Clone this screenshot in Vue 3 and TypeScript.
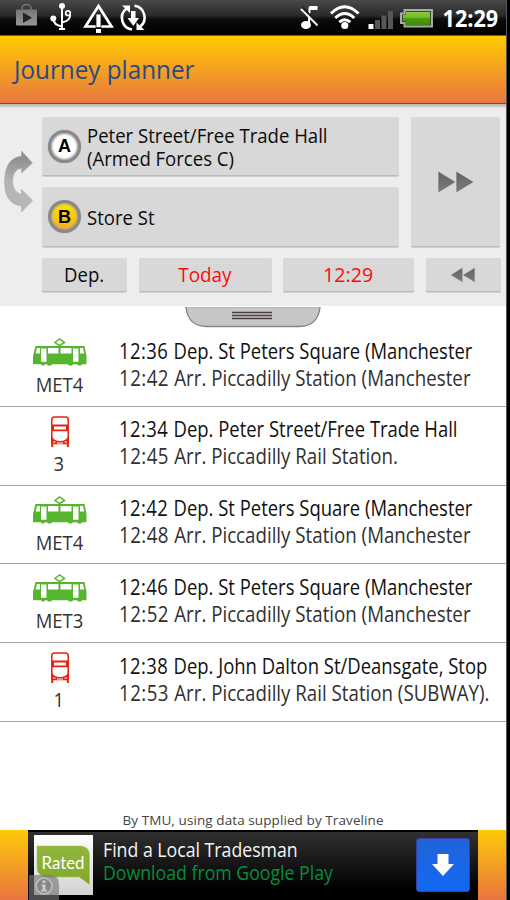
<script setup lang="ts">
interface Leg {
  time: string
  text: string
}

interface Journey {
  kind: 'tram' | 'bus'
  route: string
  legs: Leg[]
}

function journey(kind: Journey['kind'], route: string, depTime: string, from: string, arrTime: string, to: string): Journey {
  return { kind, route, legs: [{ time: depTime, text: `Dep. ${from}` }, { time: arrTime, text: `Arr. ${to}` }] }
}

const journeys: Journey[] = [
  journey('tram', 'MET4', '12:36', 'St Peters Square (Manchester', '12:42', 'Piccadilly Station (Manchester'),
  journey('bus', '3', '12:34', 'Peter Street/Free Trade Hall', '12:45', 'Piccadilly Rail Station.'),
  journey('tram', 'MET4', '12:42', 'St Peters Square (Manchester', '12:48', 'Piccadilly Station (Manchester'),
  journey('tram', 'MET3', '12:46', 'St Peters Square (Manchester', '12:52', 'Piccadilly Station (Manchester'),
  journey('bus', '1', '12:38', 'John Dalton St/Deansgate, Stop', '12:53', 'Piccadilly Rail Station (SUBWAY).'),
]
</script>

<template>
  <div class="device">
    <header class="status">
      <svg class="status-icons" width="507" height="35" viewBox="0 0 507 35">
        <defs>
          <linearGradient id="bag" x1="0" y1="0" x2="0" y2="1"><stop offset="0" stop-color="#777" /><stop offset="1" stop-color="#969696" /></linearGradient>
          <linearGradient id="batt" x1="0" y1="0" x2="0" y2="1"><stop offset="0" stop-color="#8ccb3c" /><stop offset=".45" stop-color="#6fb82a" /><stop offset=".5" stop-color="#4e9c0c" /><stop offset="1" stop-color="#3f8a05" /></linearGradient>
        </defs>
        <path d="M22 9.500V8a4.500 3.500 0 0 1 9 0v1.500" fill="none" stroke="#777" stroke-width="1.500" />
        <rect x="16" y="9.500" width="21" height="16" rx="1" fill="url(#bag)" />
        <path d="M23 12.500v10.500l9-5.300z" fill="#222" />
        <g fill="none" stroke="#fff" stroke-width="2">
          <path d="M62 6v23M53.500 19q0 6 8.500 7.500M62 22.500q9-2 8-8" />
          <circle cx="68" cy="13.200" r="2.300" stroke-width="1.700" />
        </g>
        <circle cx="62" cy="6" r="3" fill="#fff" /><circle cx="53.300" cy="18.500" r="3" fill="#fff" />
        <path d="M59 28h6v2h-6z" fill="#fff" />
        <path d="M98.500 6L85.500 26.500h26z" fill="none" stroke="#fff" stroke-width="2.700" />
        <path d="M96 14h5v13.500h-5z" fill="#fff" stroke="#111" stroke-width=".8" />
        <path d="M96 29h5v4h-5z" fill="#fff" />
        <g fill="none" stroke="#fff" stroke-width="2.600">
          <path d="M126.500 8.500A11.800 11.800 0 0 0 132 29.500M140 26.800A11.800 11.800 0 0 0 134.500 5.800" />
        </g>
        <path d="M122 5.500h8v7.500zM144.500 30h-8v-7.500z" fill="#fff" />
        <path d="M131 11h4.500v7h3.500l-5.700 8-5.800-8h3.500z" fill="#fff" />
        <path d="M309 25V12M309.500 13V8q0-1 1-1h7" fill="none" stroke="#fff" stroke-width="2" />
        <path d="M309 8.500h8.500" stroke="#fff" stroke-width="3" />
        <path d="M302.500 7.500l16 16.500" stroke="#1d1d1d" stroke-width="2" />
        <path d="M301 9l16.500 16.500" stroke="#fff" stroke-width="1.800" />
        <ellipse cx="306" cy="25" rx="5" ry="4" fill="#fff" />
        <g fill="none" stroke="#fff" stroke-width="3">
          <path d="M331 13.500q13.700-13.500 27.500 0M335.300 18q9.500-9 19 0M339.300 22.200q5.500-5 11 0" />
        </g>
        <circle cx="344.800" cy="25.500" r="3.600" fill="#fff" />
        <path d="M368.500 24h5v5h-5z" fill="#fff" />
        <path d="M375 20h5v9h-5zM381.500 15.500h5V29h-5zM388 11h5v18h-5z" fill="#585858" />
        <path d="M404.500 10H432v16.500H404.500V23H401v-9.500h3.500z" fill="#3c4a30" stroke="#a9a9a9" stroke-width="2" />
        <path d="M406 12h24v13h-24v-4h-3v-6h3z" fill="url(#batt)" />
      </svg>
      <span class="clock">12:29</span>
    </header>

    <div class="titlebar"><span class="t title">Journey planner</span></div>

    <section class="form">
      <div class="swap">
        <svg width="30" height="64" viewBox="0 0 30 64">
          <defs><linearGradient id="sw" x1="0" y1="0" x2="0" y2="1"><stop offset="0" stop-color="#858585" /><stop offset=".5" stop-color="#b4b4b4" /><stop offset="1" stop-color="#b8b8b8" /></linearGradient></defs>
          <path d="M17.500 1L28.500 13 17.500 23V18Q8.500 20 8.500 31T17.500 44.500V39.500L28.500 50.500 17.500 62V56Q.5 54 .5 32 .5 8 17.500 6z" fill="url(#sw)" stroke="#aaa" stroke-width=".6" />
        </svg>
      </div>
      <div class="grid">
        <div class="ends">
          <button class="btn place">
            <span class="pin pin-a">A</span>
            <span class="place-text"><span class="t">Peter Street/Free Trade Hall</span><span class="t">(Armed Forces C)</span></span>
          </button>
          <button class="btn place">
            <span class="pin pin-b">B</span>
            <span class="place-text"><span class="t">Store St</span></span>
          </button>
        </div>
        <button class="btn go">
          <svg width="38" height="24" viewBox="0 0 38 24">
            <defs><linearGradient id="ar" x1="0" y1="0" x2="0" y2="1"><stop offset="0" stop-color="#636363" /><stop offset="1" stop-color="#7c7c7c" /></linearGradient></defs>
            <path d="M1 1v22L19 12zM19 1v22L37 12z" fill="url(#ar)" stroke="#e6e6e6" stroke-width=".6" />
          </svg>
        </button>
      </div>
      <div class="times">
        <button class="btn dep"><span class="t">Dep.</span></button>
        <button class="btn day red"><span class="t">Today</span></button>
        <button class="btn hour red"><span class="t">12:29</span></button>
        <button class="btn back">
          <svg width="26" height="16" viewBox="0 0 26 16"><path d="M12.500.8v14.400L.8 8zM24.800.8v14.400L13 8z" fill="url(#ar)" stroke="#bbb" stroke-width=".4" /></svg>
        </button>
      </div>
    </section>

    <div class="handle-row">
      <svg width="136" height="22" viewBox="0 0 136 22">
        <path d="M1 1.500C2 13 9 20.500 22 20.500H114C127 20.500 134 13 135 1.500z" fill="#c6c6c4" />
        <path d="M1 1.500H135" stroke="#b5b5b5" />
        <path d="M1 1C2 13 9 20.500 22 20.500H114C127 20.500 134 13 135 1" fill="none" stroke="#858585" stroke-width="1.400" />
        <path d="M47 6.500h40M47 9.500h40M47 12.500h40" stroke="#4b4145" stroke-width="1.600" />
      </svg>
    </div>

    <ul class="list">
      <li v-for="(j, i) in journeys" :key="i" class="row">
        <div class="mode">
          <svg v-if="j.kind === 'tram'" class="tram" width="54" height="28" viewBox="0 0 54 28">
            <path d="M22 4.500L26.500 1 31.500 4.500 26.500 7.500zM26.500 7.500v3" fill="none" stroke="#55b52f" stroke-width="1.500" />
            <path d="M2.500 8H51.500L53.500 18V26.300H49l-1 1.200h-3L44 26.300H40l-1 1.200H36L35 26.300H19l-1 1.200H15L14 26.300H12l-1 1.200H9L8 26.300H0V18z" fill="#55b52f" />
            <path d="M4 10h3v5.500H2.700zM8 10.500h5.500v13.300H8zM15 10h10.500v5.500H15zM27.500 10H38.500v5.500H27.500zM40 10.500h5.500v13.300H40zM47 10h3l1.200 5.500H47z" fill="#fff" />
          </svg>
          <svg v-else class="bus" width="20" height="31" viewBox="0 0 20 31">
            <path d="M4 1H16Q18 1.200 18.200 3.500V27H1.800V3.500Q2 1.200 4 1z" fill="#fff" stroke="#e3220f" stroke-width="1.500" />
            <path d="M2 8.500H18v2H2zM2 13.500H18v1.800H2zM2 9h2v6H2zM16 9h2v6h-2zM1.200 19.500Q3.500 25 10 25T18.800 19.500V28.300H1.200zM1.200 27h2v4h-2zM16.800 27h2v4h-2z" fill="#e3220f" />
            <path d="M3 26h2.500M14.500 26H17M7 27h6" stroke="#fff" stroke-width="1" />
          </svg>
          <span class="route t">{{ j.route }}</span>
        </div>
        <div class="legs">
          <span v-for="(leg, k) in j.legs" :key="k" class="t leg" :class="{ arr: k === 1 }"><span class="time">{{ `${leg.time} ` }}</span>{{ leg.text }}</span>
        </div>
      </li>
    </ul>

    <p class="credit"><span class="t">By TMU, using data supplied by Traveline</span></p>

    <footer class="adbar">
      <div class="ad">
        <svg class="rated" width="64" height="65" viewBox="0 0 64 65">
          <defs>
            <linearGradient id="tile" x1="0" y1="0" x2="0" y2="1"><stop offset="0" stop-color="#fff" /><stop offset="1" stop-color="#d2d2d2" /></linearGradient>
            <linearGradient id="leaf" x1="0" y1="0" x2="0" y2="1"><stop offset="0" stop-color="#92b63c" /><stop offset="1" stop-color="#7fa82c" /></linearGradient>
          </defs>
          <rect x="5" y="0" width="59" height="60" fill="url(#tile)" />
          <path d="M8 11H52Q60.500 12 60.500 20V49.500L50 42H18Q8 41 8 33z" fill="url(#leaf)" stroke="#a7c662" stroke-width=".6" />
          <text x="12.500" y="33.500" textLength="43" lengthAdjust="spacingAndGlyphs" class="rated-text">Rated</text>
          <path d="M0 40H23Q30 41 30 50V65H0z" fill="#777" fill-opacity=".65" />
          <circle cx="15" cy="51" r="8" fill="#888" stroke="#bdbdbd" stroke-width="1.700" />
          <path d="M13.500 45.500h3v2.500h-3zM12.500 49.500h4v5.500h1.500v1.500h-6V55h1.500v-4h-1z" fill="#ccc" />
        </svg>
        <div class="ad-text">
          <span class="t ad-title">Find a Local Tradesman</span>
          <span class="t ad-sub">Download from Google Play</span>
        </div>
        <button class="download">
          <svg width="22" height="22" viewBox="0 0 22 22"><path d="M5.500 0h11v10H22L11 22 0 10h5.500z" fill="#fff" /></svg>
        </button>
      </div>
    </footer>
  </div>
</template>

<style>
body { background: #000; }
</style>

<style scoped>
* { box-sizing: border-box; }
.device { width: 507px; height: 900px; background: #fff; display: flex; flex-direction: column; font-family: "Open Sans", "Noto Sans", sans-serif; color: #111; border-right: 1px solid #555; overflow: hidden; }
.t { display: inline-block; white-space: nowrap; transform: scaleX(.885); transform-origin: 0 50%; }
.status { height: 35px; flex: none; width: 507px; display: grid; background: linear-gradient(#494949, #292929 45%, #0b0b0b 55%, #000) #000; box-shadow: 0 0 0 1px #000; }
.status > * { grid-area: 1 / 1; }
.clock { justify-self: end; padding-right: 9px; color: #fff; font-weight: 700; font-size: 23px; line-height: 37px; transform: scaleX(.94); transform-origin: calc(100% - 9px) 50%; }
.titlebar { flex: none; height: 69px; background: linear-gradient(#ffca02, #e87840); border-top: 1px solid #7a6204; border-bottom: 1px solid #774a35; padding-left: 14px; line-height: 67px; font-size: 26px; color: #294a85; }
.title { transform: scaleX(.932); }
.form { flex: none; height: 202px; background: linear-gradient(#b8b8b8, #c4c4c4 2px, #ededed 4px); padding: 13px 0 0 42px; display: grid; grid-template: 130px 34px / 459px; row-gap: 11px; position: relative; }
.swap { position: absolute; left: 4px; top: 46px; }
.grid { display: grid; grid-template-columns: 357px 89px; column-gap: 12px; }
.ends { display: grid; grid-template-rows: 59px 60px; row-gap: 11px; }
.btn { border: 0; border-bottom: 1.500px solid #bcbcbc; border-radius: 2px; background: #d8d8d8; padding: 0; font: 20.500px "Open Sans", "Noto Sans", sans-serif; color: #0c0c0c; display: flex; align-items: center; justify-content: center; box-shadow: 0 1px 0 #cfcfcf; }
.btn .t { transform: scaleX(.905); transform-origin: 50% 50%; }
.place { justify-content: flex-start; padding-left: 6px; }
.place-text { margin-left: 6px; padding-top: 1px; display: flex; flex-direction: column; line-height: 22.500px; align-items: flex-start; }
.place-text .t { transform-origin: 0 50%; }
.pin { width: 33px; height: 33px; border: 3.500px solid #888; border-radius: 50%; display: flex; align-items: center; justify-content: center; font: 700 18px/1 "Liberation Sans", sans-serif; color: #000; box-shadow: inset 0 0 2px 1px #999, 0 0 1px #999; }
.pin-a { background: #fff; }
.pin-b { background: linear-gradient(#ffe300, #f5ae24); }
.go { height: 130px; }
.times { display: grid; grid-template-columns: 85px 133px 131px 75px; column-gap: 11.500px; }
.dep .t, .day .t, .hour .t { padding-bottom: 2px; }
.red { color: #fe0c0c; }
.day .t { transform: scaleX(.92); }
.hour .t { transform: scaleX(.96); }
.handle-row { flex: none; height: 22px; padding-left: 185px; }
.handle-row svg { display: block; }
.list { list-style: none; margin: 0; padding: 0; flex: none; }
.row { height: 78.800px; border-bottom: 1px solid #a3a3a3; display: grid; grid-template-columns: 118.500px 1fr; }
.mode { display: flex; flex-direction: column; align-items: center; font-size: 20.500px; color: #333; }
.mode svg { display: block; flex: none; margin: 10px 0 0 1px; }
.mode .bus { margin: 9px 0 -2px 1px; }
.route { transform: scaleX(.9); transform-origin: 50% 50%; line-height: 36px; }
.legs { padding-top: 9.500px; display: flex; flex-direction: column; align-items: flex-start; line-height: 27px; font-size: 21px; }
.time { letter-spacing: .5px; white-space: pre; }
.leg { transform: scaleX(.879); }
.leg.arr { color: #303030; transform: scaleX(.891); }
.credit { margin: auto 0 0; height: 19px; font-size: 13.500px; line-height: 19px; color: #444; text-align: center; flex: none; }
.credit .t { transform: none; letter-spacing: .09px; }
.adbar { flex: none; height: 70px; background: linear-gradient(#ffc908, #e87540); padding: 0 28px; }
.ad { height: 70px; background: linear-gradient(#303030, #000 85%); border-top: 2px solid #000; display: flex; align-items: flex-start; width: 450px; }
.rated { display: block; margin-top: 3px; margin-left: 1px; flex: none; }
.rated-text { font: 17px Lato, sans-serif; fill: #fff; }
.ad-text { display: flex; flex-direction: column; align-items: flex-start; margin-left: 10px; margin-top: 6px; line-height: 23px; font-size: 20px; width: 313px; }
.ad-title { color: #f4f4f4; }
.ad-sub { color: #078d3c; }
.download { flex: none; width: 54px; height: 54px; margin-top: 6px; border: 1px solid #3a3fa0; border-radius: 3px; background: linear-gradient(#2163d9, #1268f2); display: flex; align-items: center; justify-content: center; padding: 0; }
</style>
